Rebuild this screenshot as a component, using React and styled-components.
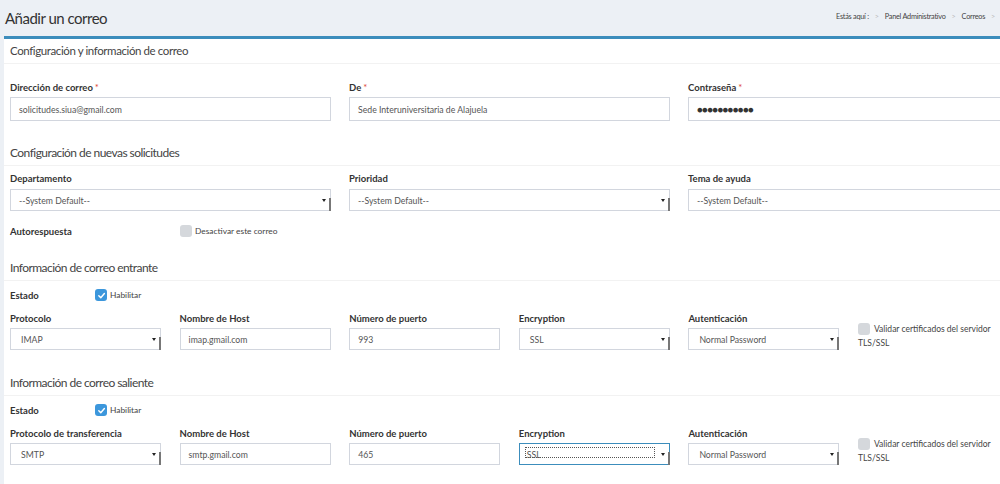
import React from "react";
import styled, { createGlobalStyle } from "styled-components";

const GlobalStyle = createGlobalStyle`
  html, body {
    margin: 0;
    padding: 0;
    background: #ecf0f5;
    overflow: hidden;
  }
  body {
    font-family: "Lato", "Open Sans", sans-serif;
    color: #333;
  }
`;

const Page = styled.div`
  width: 1040px;
`;

const ContentHeader = styled.div`
  height: 36px;
  display: flex;
  align-items: center;
  justify-content: space-between;
  padding: 0 0 0 5px;
`;

const Title = styled.h1`
  margin: 0;
  font-size: 15px;
  letter-spacing: -0.5px;
  font-weight: 400;
  color: #333;
`;

const Breadcrumb = styled.ol`
  list-style: none;
  margin: 0 0 4px 0;
  padding: 0;
  display: flex;
  align-items: center;
  font-size: 7.3px;
  letter-spacing: -0.25px;
  color: #444;
  width: 204px;
  white-space: nowrap;
`;

const Crumb = styled.li`
  & + &::before {
    content: ">";
    color: #bbb;
    padding: 0 6px;
  }
`;

const Box = styled.div`
  margin-left: 4px;
  background: #fff;
  border-top: 3px solid #3c8dbc;
  min-height: 460px;
`;

const BoxHeader = styled.div`
  height: 24px;
  line-height: 24px;
  padding-left: 6px;
  font-size: 11.5px;
  letter-spacing: -0.4px;
  color: #444;
  border-bottom: 1px solid #f2f2f2;
`;

const Body = styled.div`
  padding: 0 6px;
`;

const SectionTitle = styled.div`
  margin: ${(p) => p.$top}px -6px 0;
  padding-left: 6px;
  height: 24px;
  line-height: 24px;
  font-size: 12px;
  letter-spacing: -0.55px;
  color: #444;
  border-bottom: 1px solid #f2f2f2;
`;

const Grid = styled.div`
  display: grid;
  grid-template-columns: repeat(${(p) => p.$cols}, ${(p) => p.$w}px);
  column-gap: ${(p) => p.$gap}px;
  margin-top: ${(p) => p.$top}px;
`;

const Group = styled.div`
  display: flex;
  flex-direction: column;
`;

const Label = styled.label`
  display: block;
  height: 14px;
  line-height: 14px;
  font-size: 9.5px;
  font-weight: 700;
  color: #333;
  margin-bottom: ${(p) => p.$gap ?? 2}px;
  white-space: nowrap;
`;

const Req = styled.span`
  color: #dd4b39;
  font-weight: 400;
  margin-left: 2px;
`;

const Field = styled.div`
  position: relative;
  box-sizing: border-box;
  height: ${(p) => p.$h}px;
  border: 1px solid ${(p) => (p.$focus ? "#3c8dbc" : "#d2d6de")};
  padding-left: ${(p) => p.$pad ?? 8}px;
  display: flex;
  align-items: center;
  font-size: 8.7px;
  color: #555;
  white-space: nowrap;
`;

const Dots = styled.span`
  font-size: 9.5px;
  letter-spacing: -0.6px;
  color: #333;
`;

const Arrow = styled.span`
  position: absolute;
  right: 4px;
  top: 50%;
  margin-top: -1px;
  border-left: 2px solid transparent;
  border-right: 2px solid transparent;
  border-top: 3px solid #222;
`;

const ArrowShade = styled.span`
  position: absolute;
  right: -1px;
  bottom: -1px;
  width: 2px;
  height: 65%;
  background: #777;
`;

const FocusRing = styled.span`
  position: absolute;
  left: 5px;
  right: 14px;
  top: 3px;
  bottom: 6px;
  border: 1px dotted #555;
`;

const FocusText = styled.span`
  margin-left: -3px;
`;

const InlineRow = styled.div`
  display: flex;
  align-items: center;
  height: 14px;
  margin-top: ${(p) => p.$top}px;
`;

const RowLabel = styled.span`
  width: ${(p) => p.$w}px;
  font-size: 9.5px;
  font-weight: 700;
  color: #333;
`;

const Check = styled.span`
  box-sizing: border-box;
  width: 12px;
  height: 12px;
  border-radius: 3px;
  background: ${(p) => (p.$on ? "#3c97dc" : "#d5d8dc")};
  display: inline-flex;
  align-items: center;
  justify-content: center;
  flex-shrink: 0;
`;

const CheckText = styled.span`
  font-size: 8.4px;
  color: #444;
  margin-left: 3px;
`;

const ValidateBox = styled.div`
  padding-top: 10px;
  font-size: 8.5px;
  color: #444;
  line-height: 14px;
`;

const ValidateLine = styled.div`
  display: flex;
  align-items: center;
  gap: 4px;
`;

const Tick = () => (
  <svg width="9" height="9" viewBox="0 0 10 10">
    <path d="M2 5.2 L4.2 7.4 L8.2 2.8" fill="none" stroke="#fff" strokeWidth="1.6" strokeLinecap="round" strokeLinejoin="round" />
  </svg>
);

const Checkbox = ({ on, children }) => (
  <>
    <Check $on={on}>{on && <Tick />}</Check>
    <CheckText>{children}</CheckText>
  </>
);

const Select = ({ children, h, focus, pad }) => (
  <Field $h={h} $focus={focus} $pad={pad}>
    {focus ? (
      <>
        <FocusRing />
        <FocusText>{children}</FocusText>
      </>
    ) : (
      children
    )}
    <Arrow />
    <ArrowShade />
  </Field>
);

const ServerRow = ({ first, proto, host, port, enc, focus, top }) => (
  <Grid $cols={6} $w={151} $gap={18.6} $top={top}>
    <Group>
      <Label>{first}</Label>
      <Select h={22} pad={10}>{proto}</Select>
    </Group>
    <Group>
      <Label>Nombre de Host</Label>
      <Field $h={22}>{host}</Field>
    </Group>
    <Group>
      <Label>Número de puerto</Label>
      <Field $h={22}>{port}</Field>
    </Group>
    <Group>
      <Label>Encryption</Label>
      <Select h={22} pad={10} focus={focus}>{enc}</Select>
    </Group>
    <Group>
      <Label>Autenticación</Label>
      <Select h={22} pad={10}>Normal Password</Select>
    </Group>
    <ValidateBox>
      <ValidateLine>
        <Check />
        <span>Validar certificados del servidor</span>
      </ValidateLine>
      <div>TLS/SSL</div>
    </ValidateBox>
  </Grid>
);

export default function App() {
  return (
    <Page>
      <GlobalStyle />
      <ContentHeader>
        <Title>Añadir un correo</Title>
        <Breadcrumb>
          <Crumb>Estás aquí :</Crumb>
          <Crumb>Panel Administrativo</Crumb>
          <Crumb>Correos</Crumb>
          <Crumb>Añadir un correo</Crumb>
        </Breadcrumb>
      </ContentHeader>
      <Box>
        <BoxHeader>Configuración y información de correo</BoxHeader>
        <Body>
          <Grid $cols={3} $w={321} $gap={18} $top={17}>
            <Group>
              <Label>
                Dirección de correo<Req>*</Req>
              </Label>
              <Field $h={24}>solicitudes.siua@gmail.com</Field>
            </Group>
            <Group>
              <Label>
                De<Req>*</Req>
              </Label>
              <Field $h={24}>Sede Interuniversitaria de Alajuela</Field>
            </Group>
            <Group>
              <Label>
                Contraseña<Req>*</Req>
              </Label>
              <Field $h={24}>
                <Dots>●●●●●●●●●●●</Dots>
              </Field>
            </Group>
          </Grid>

          <SectionTitle $top={20}>Configuración de nuevas solicitudes</SectionTitle>
          <Grid $cols={3} $w={321} $gap={18} $top={6}>
            <Group>
              <Label $gap={3}>Departamento</Label>
              <Select h={22}>--System Default--</Select>
            </Group>
            <Group>
              <Label $gap={3}>Prioridad</Label>
              <Select h={22}>--System Default--</Select>
            </Group>
            <Group>
              <Label $gap={3}>Tema de ayuda</Label>
              <Field $h={22}>--System Default--</Field>
            </Group>
          </Grid>
          <InlineRow $top={13}>
            <RowLabel $w={170}>Autorespuesta</RowLabel>
            <Checkbox>Desactivar este correo</Checkbox>
          </InlineRow>

          <SectionTitle $top={18}>Información de correo entrante</SectionTitle>
          <InlineRow $top={7}>
            <RowLabel $w={85}>Estado</RowLabel>
            <Checkbox on>Habilitar</Checkbox>
          </InlineRow>
          <ServerRow top={10} first="Protocolo" proto="IMAP" host="imap.gmail.com" port="993" enc="SSL" />

          <SectionTitle $top={21}>Información de correo saliente</SectionTitle>
          <InlineRow $top={7}>
            <RowLabel $w={85}>Estado</RowLabel>
            <Checkbox on>Habilitar</Checkbox>
          </InlineRow>
          <ServerRow
            top={10}
            first="Protocolo de transferencia"
            proto="SMTP"
            host="smtp.gmail.com"
            port="465"
            enc="SSL"
            focus
          />
        </Body>
      </Box>
    </Page>
  );
}
